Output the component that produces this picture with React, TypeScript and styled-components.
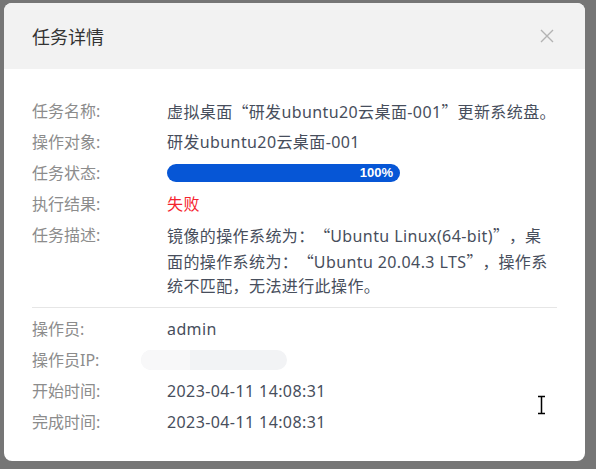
import { FC } from "react";
import styled, { createGlobalStyle } from "styled-components";

const GlobalStyle = createGlobalStyle`
  html, body {
    margin: 0;
    padding: 0;
    background: #767676;
    font-family: "Noto Sans", "Noto Sans CJK SC", sans-serif;
    text-spacing-trim: space-all;
  }
`;

const Backdrop = styled.div`
  position: relative;
  width: 596px;
  height: 469px;
  padding: 3px 0 0 4px;
  box-sizing: border-box;
  overflow: hidden;
`;

const Modal = styled.div`
  width: 581px;
  height: 458px;
  background: #fff;
  border-radius: 8px;
  overflow: hidden;
  display: flex;
  flex-direction: column;
`;

const Header = styled.div`
  height: 66px;
  flex-shrink: 0;
  background: #f2f2f2;
  display: flex;
  align-items: center;
  justify-content: space-between;
  padding: 0 30px 0 28px;
  box-sizing: border-box;
`;

const Title = styled.span`
  font-size: 18px;
  color: #333;
  font-family: "Noto Sans CJK SC", sans-serif;
`;

const CloseBtn = styled.button`
  border: none;
  background: none;
  padding: 0;
  width: 16px;
  height: 16px;
  cursor: pointer;
  display: flex;
`;

const Body = styled.div`
  padding: 30px 28px 20px 28px;
  display: flex;
  flex-direction: column;
  gap: 6px;
`;

const Row = styled.div`
  display: flex;
  align-items: flex-start;
  min-height: 25px;
  font-size: 16px;
  line-height: 24px;
`;

const Label = styled.span`
  width: 135px;
  flex-shrink: 0;
  color: #8c8c8c;
`;

const Value = styled.span<{ $color?: string }>`
  flex: 1;
  color: ${(p) => p.$color || "#474e5c"};
  letter-spacing: 0.4px;
`;

const Desc = styled(Value)`
  line-height: 24.5px;
`;

const Cjk = styled.span`
  font-family: "Noto Sans CJK SC", sans-serif;
  letter-spacing: 0;
`;

const Divider = styled.div`
  height: 1px;
  background: #e6e6e6;
  margin: 2px 0 3px;
`;

const Progress = styled.div`
  width: 233px;
  height: 18px;
  margin-top: 3px;
  border-radius: 9px;
  background: #0656d6;
  display: flex;
  align-items: center;
  justify-content: flex-end;
  padding-right: 7px;
  box-sizing: border-box;
  color: #fff;
  font-weight: 700;
  font-size: 13px;
  font-family: "Liberation Sans", Arial, sans-serif;
`;

const Masked = styled.span`
  display: flex;
  width: 146px;
  height: 20px;
  margin: 2px 0 0 -26px;
  border-radius: 10px;
  overflow: hidden;
  background: #f2f3f5;
`;

const MaskedLeft = styled.span`
  width: 49px;
  background: #f8f8f9;
`;

const Cursor = styled.svg`
  position: absolute;
  left: 537px;
  top: 395px;
`;

const App: FC = () => {
  return (
    <>
      <GlobalStyle />
      <Backdrop>
        <Modal>
          <Header>
            <Title>任务详情</Title>
            <CloseBtn aria-label="close">
              <svg width="16" height="16" viewBox="0 0 16 16">
                <path d="M2 2 L14 14 M14 2 L2 14" stroke="#b3b3b3" strokeWidth="1.4" />
              </svg>
            </CloseBtn>
          </Header>
          <Body>
            <Row>
              <Label>任务名称:</Label>
              <Value>
                虚拟桌面<Cjk>“</Cjk>研发ubuntu20云桌面-001<Cjk>”</Cjk>更新系统盘。
              </Value>
            </Row>
            <Row>
              <Label>操作对象:</Label>
              <Value>研发ubuntu20云桌面-001</Value>
            </Row>
            <Row>
              <Label>任务状态:</Label>
              <Progress>100%</Progress>
            </Row>
            <Row>
              <Label>执行结果:</Label>
              <Value $color="#f5222d">失败</Value>
            </Row>
            <Row>
              <Label>任务描述:</Label>
              <Desc>
                镜像的操作系统为<Cjk>：“</Cjk>Ubuntu Linux(64-bit)<Cjk>”，</Cjk>桌面的操作系统为<Cjk>：“</Cjk>Ubuntu 20.04.3 LTS<Cjk>”，</Cjk>操作系统不匹配，无法进行此操作。
              </Desc>
            </Row>
            <Divider />
            <Row>
              <Label>操作员:</Label>
              <Value>admin</Value>
            </Row>
            <Row>
              <Label>操作员IP:</Label>
              <Masked>
                <MaskedLeft />
              </Masked>
            </Row>
            <Row>
              <Label>开始时间:</Label>
              <Value>2023-04-11 14:08:31</Value>
            </Row>
            <Row>
              <Label>完成时间:</Label>
              <Value>2023-04-11 14:08:31</Value>
            </Row>
          </Body>
        </Modal>
        <Cursor width="9" height="20" viewBox="0 0 9 20">
          <path d="M1 1.5 H8 M4.5 1.5 V18.5 M1 18.5 H8" stroke="#000" strokeWidth="1.5" fill="none" />
        </Cursor>
      </Backdrop>
    </>
  );
};

export default App;
